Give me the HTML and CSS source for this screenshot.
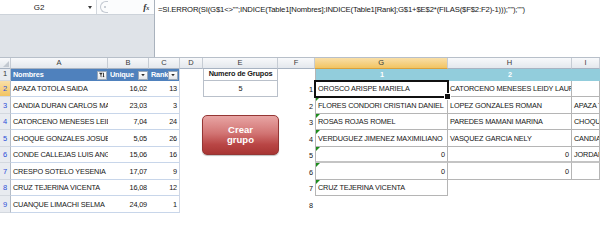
FILE: index.html
```html
<!DOCTYPE html>
<html lang="es">
<head>
<meta charset="utf-8">
<title>Excel - grupos</title>
<link rel="stylesheet" href="styles.css">
</head>
<body>
<div class="app">
  <div class="fbar">
    <div class="fbar-left">
      <div class="fbar-top">
        <div class="namebox"><span class="nb-text">G2</span><span class="nb-arrow"></span></div>
        <div class="grip"><span class="grip-dot"></span></div>
        <div class="fx">f<span class="fx-x">x</span></div>
      </div>
    </div>
    <div class="formula">=SI.ERROR(SI(G$1&lt;&gt;"";INDICE(Table1[Nombres];INDICE(Table1[Rank];G$1+$E$2*(FILAS($F$2:F2)-1)));"");"")</div>
  </div>

  <div class="sheet">
    <!-- column headers -->
    <div class="ch corner"><span class="corner-tri"></span></div>
    <div class="ch">A</div>
    <div class="ch">B</div>
    <div class="ch">C</div>
    <div class="ch">D</div>
    <div class="ch">E</div>
    <div class="ch">F</div>
    <div class="ch on">G</div>
    <div class="ch">H</div>
    <div class="ch">I</div>

    <!-- row 1 -->
    <div class="rh first">1</div>
    <div class="th"><span>Nombres</span>
      <span class="fb"><svg width="9" height="8" viewBox="0 0 9 8"><path d="M1 1.5h4.4L3.8 3.6v2.9l-0.9-0.6V3.6z" fill="#2b2b2b"/><path d="M6.2 1.5v4.8" stroke="#2b2b2b" stroke-width="1"/><path d="M5 5l1.2 1.5L7.4 5z" fill="#2b2b2b"/></svg></span></div>
    <div class="th"><span>Unique</span><span class="fb"><svg width="9" height="8" viewBox="0 0 9 8"><path d="M2.5 3h4L4.5 5.5z" fill="#2b2b2b"/></svg></span></div>
    <div class="th tr"><span>Rank</span><span class="fb"><svg width="9" height="8" viewBox="0 0 9 8"><path d="M2.5 3h4L4.5 5.5z" fill="#2b2b2b"/></svg></span></div>
    <div class="c"></div>
    <div class="c e1">Numero de Grupos</div>
    <div class="c"></div>
    <div class="c hd gl">1</div>
    <div class="c hd">2</div>
    <div class="c hd"></div>

    <!-- row 2 -->
    <div class="rh on">2</div>
    <div class="c td">APAZA TOTOLA SAIDA</div>
    <div class="c td num">16,02</div>
    <div class="c td num tr">13</div>
    <div class="c"></div>
    <div class="c e2">5</div>
    <div class="c num">1</div>
    <div class="c bx gl active">OROSCO ARISPE MARIELA</div>
    <div class="c bx">CATORCENO MENESES LEIDY LAURA</div>
    <div class="c bx"></div>

    <!-- row 3 -->
    <div class="rh">3</div>
    <div class="c td">CANDIA DURAN CARLOS MARIO</div>
    <div class="c td num">23,03</div>
    <div class="c td num tr">3</div>
    <div class="c"></div>
    <div class="c"></div>
    <div class="c num">2</div>
    <div class="c bx gl tri">FLORES CONDORI CRISTIAN DANIEL</div>
    <div class="c bx">LOPEZ GONZALES ROMAN</div>
    <div class="c bx">APAZA TOTOLA SAIDA</div>

    <!-- row 4 -->
    <div class="rh">4</div>
    <div class="c td">CATORCENO MENESES LEIDY LAURA</div>
    <div class="c td num">7,04</div>
    <div class="c td num tr">24</div>
    <div class="c"></div>
    <div class="c"></div>
    <div class="c num">3</div>
    <div class="c bx gl tri">ROSAS ROJAS ROMEL</div>
    <div class="c bx">PAREDES MAMANI MARINA</div>
    <div class="c bx">CHOQUE GONZALES JOSUE</div>

    <!-- row 5 -->
    <div class="rh">5</div>
    <div class="c td">CHOQUE GONZALES JOSUE</div>
    <div class="c td num">5,05</div>
    <div class="c td num tr">26</div>
    <div class="c"></div>
    <div class="c"></div>
    <div class="c num">4</div>
    <div class="c bx gl tri">VERDUGUEZ JIMENEZ MAXIMILIANO</div>
    <div class="c bx">VASQUEZ GARCIA NELY</div>
    <div class="c bx">CANDIA DURAN CARLOS MARIO</div>

    <!-- row 6 -->
    <div class="rh">6</div>
    <div class="c td">CONDE CALLEJAS LUIS ANGEL</div>
    <div class="c td num">15,06</div>
    <div class="c td num tr">16</div>
    <div class="c"></div>
    <div class="c"></div>
    <div class="c num">5</div>
    <div class="c bx gl tri num thick">0</div>
    <div class="c bx num thick">0</div>
    <div class="c bx thick">JORDAN CRUZ PAOLA</div>

    <!-- row 7 -->
    <div class="rh">7</div>
    <div class="c td">CRESPO SOTELO YESENIA</div>
    <div class="c td num">17,07</div>
    <div class="c td num tr">9</div>
    <div class="c"></div>
    <div class="c"></div>
    <div class="c num">6</div>
    <div class="c bx gl tri num">0</div>
    <div class="c bx num">0</div>
    <div class="c bx"></div>

    <!-- row 8 -->
    <div class="rh">8</div>
    <div class="c td">CRUZ TEJERINA VICENTA</div>
    <div class="c td num">16,08</div>
    <div class="c td num tr">12</div>
    <div class="c"></div>
    <div class="c"></div>
    <div class="c num">7</div>
    <div class="c bx gl tri">CRUZ TEJERINA VICENTA</div>
    <div class="c"></div>
    <div class="c"></div>

    <!-- row 9 -->
    <div class="rh">9</div>
    <div class="c td">CUANQUE LIMACHI SELMA</div>
    <div class="c td num">24,09</div>
    <div class="c td num tr">1</div>
    <div class="c"></div>
    <div class="c"></div>
    <div class="c num">8</div>
    <div class="c"></div>
    <div class="c"></div>
    <div class="c"></div>

    <div class="btn">Crear<br>grupo</div>
  </div>
</div>
</body>
</html>
```

FILE: styles.css
```css
* { box-sizing: border-box; margin: 0; padding: 0; }
html, body { width: 600px; height: 246px; overflow: hidden; background: #fff; }
body {
  font-family: "Liberation Sans", Arial, sans-serif;
  font-size: 7.3px;
  letter-spacing: -0.15px;
  color: #161616;
}

/* ---------- formula bar ---------- */
.fbar {
  display: flex;
  height: 58px;
  background: #dfe3e8;
  border-bottom: 1px solid #b7bfc9;
}
.fbar-left { width: 154px; display: flex; flex-direction: column; }
.fbar-top {
  height: 15px;
  display: flex;
  align-items: center;
  background: #fbfcfd;
  border-bottom: 1px solid #cdd3da;
}
.namebox {
  width: 97px;
  height: 100%;
  display: flex;
  align-items: center;
  background: #fff;
  border-right: 1px solid #d3d8de;
}
.nb-text { flex: 1; text-align: center; font-size: 8px; padding-right: 10px; letter-spacing: 0; }
.nb-arrow {
  width: 0; height: 0;
  border-left: 2.5px solid transparent;
  border-right: 2.5px solid transparent;
  border-top: 3px solid #3a3a3a;
  margin-right: 4px;
}
.grip {
  width: 8px;
  height: 12px;
  margin-left: 3px;
  border: 1px solid #c3c9d1;
  border-right: none;
  border-radius: 6px 0 0 6px;
  display: flex;
  align-items: center;
  justify-content: center;
}
.grip-dot { width: 2px; height: 2px; border-radius: 1px; background: #b9c0c8; }
.fx {
  margin-left: auto;
  margin-right: 5px;
  font-family: "Liberation Serif", serif;
  font-style: italic;
  font-weight: bold;
  font-size: 9px;
  color: #333;
}
.fx-x { font-size: 6px; }
.formula {
  flex: 1;
  background: #fff;
  border-left: 1px solid #a9b2bd;
  padding: 5px 3px;
  font-size: 7.7px;
  line-height: 10px;
  white-space: nowrap;
}

/* ---------- sheet ---------- */
.sheet {
  position: relative;
  display: grid;
  grid-template-columns: 11px 97px 41px 31px 23px 75px 37px 133px 124px 28px;
  grid-template-rows: 11px 12px 16px 17px 16px 17px 16px 17px 16px 17px;
}
.ch {
  background: linear-gradient(#f8f9fb, #e4e8ed);
  border-right: 1px solid #c6ccd4;
  border-bottom: 1px solid #a8b3c2;
  color: #3a3a3a;
  font-size: 7.5px;
  line-height: 10px;
  text-align: center;
}
.ch.on {
  background: linear-gradient(#f9dfa8, #f2c462);
  border-bottom-color: #d9a13d;
}
.corner { position: relative; }
.corner-tri {
  position: absolute;
  right: 1px;
  bottom: 1px;
  width: 0; height: 0;
  border-left: 6px solid transparent;
  border-bottom: 6px solid #c3c9d1;
}
.rh {
  background: #e8ebf0;
  border-right: 1px solid #b3bcc8;
  border-bottom: 1px solid #d3d8df;
  color: #2c4ed8;
  text-align: center;
  display: flex;
  align-items: flex-end;
  justify-content: center;
  line-height: 10px;
  padding-bottom: 2px;
  font-size: 7.5px;
}
.rh.first { color: #333; padding-bottom: 1px; }
.rh.on { background: linear-gradient(#f9dfa8, #f2c462); }

.c {
  display: flex;
  align-items: flex-end;
  white-space: nowrap;
  overflow: hidden;
  line-height: 10px;
  padding: 0 2px 2px 2px;
  position: relative;
}
.num { justify-content: flex-end; }

/* table */
.th {
  background: #4f81bd;
  color: #fff;
  font-weight: bold;
  display: flex;
  align-items: center;
  justify-content: space-between;
  padding: 0 1px 0 2px;
  line-height: 10px;
}
.fb {
  width: 10px;
  height: 9px;
  background: linear-gradient(#ffffff, #e3e6ea);
  border: 1px solid #9aa8b8;
  display: flex;
  align-items: center;
  justify-content: center;
}
.fb svg { display: block; }
.td { border-bottom: 1px solid #c8d6ea; }
.tr { border-right: 1px solid #d0d7e5; }

/* number of groups box */
.e1, .e2 {
  justify-content: center;
  border-left: 1px solid #b9c0ca;
  border-right: 1px solid #b9c0ca;
  border-bottom: 1px solid #b9c0ca;
}
.e1 { font-weight: bold; padding-bottom: 1px; }

/* group area */
.hd {
  background: #92cddc;
  color: #fff;
  font-weight: bold;
  justify-content: center;
  padding-bottom: 1px;
}
.bx {
  border-right: 1px solid #b5b5b5;
  border-bottom: 1px solid #b5b5b5;
}
.gl { border-left: 1px solid #b5b5b5; }
.thick { border-bottom: 2px solid #c4c4c4; padding-bottom: 1px; }
.tri::before {
  content: "";
  position: absolute;
  left: 0;
  top: 0;
  border-top: 4px solid #1c8c1c;
  border-right: 4px solid transparent;
}
.active {
  outline: 2px solid #111;
  outline-offset: -1px;
  z-index: 2;
  overflow: visible;
}
.active::after {
  content: "";
  position: absolute;
  right: -4px;
  bottom: -4px;
  width: 5px;
  height: 5px;
  background: #111;
  border: 1px solid #fff;
}

/* floating button shape */
.btn {
  position: absolute;
  left: 202px;
  top: 57px;
  width: 77px;
  height: 40px;
  border-radius: 5px;
  border: 1px solid #943634;
  background: linear-gradient(#e8a5a4 0%, #d27574 45%, #b94645 75%, #a83533 100%);
  box-shadow: 0 1px 1px rgba(0,0,0,0.25);
  color: #fff;
  font-weight: bold;
  font-size: 9.5px;
  letter-spacing: 0;
  line-height: 10px;
  display: flex;
  align-items: center;
  justify-content: center;
  text-align: center;
}
```
